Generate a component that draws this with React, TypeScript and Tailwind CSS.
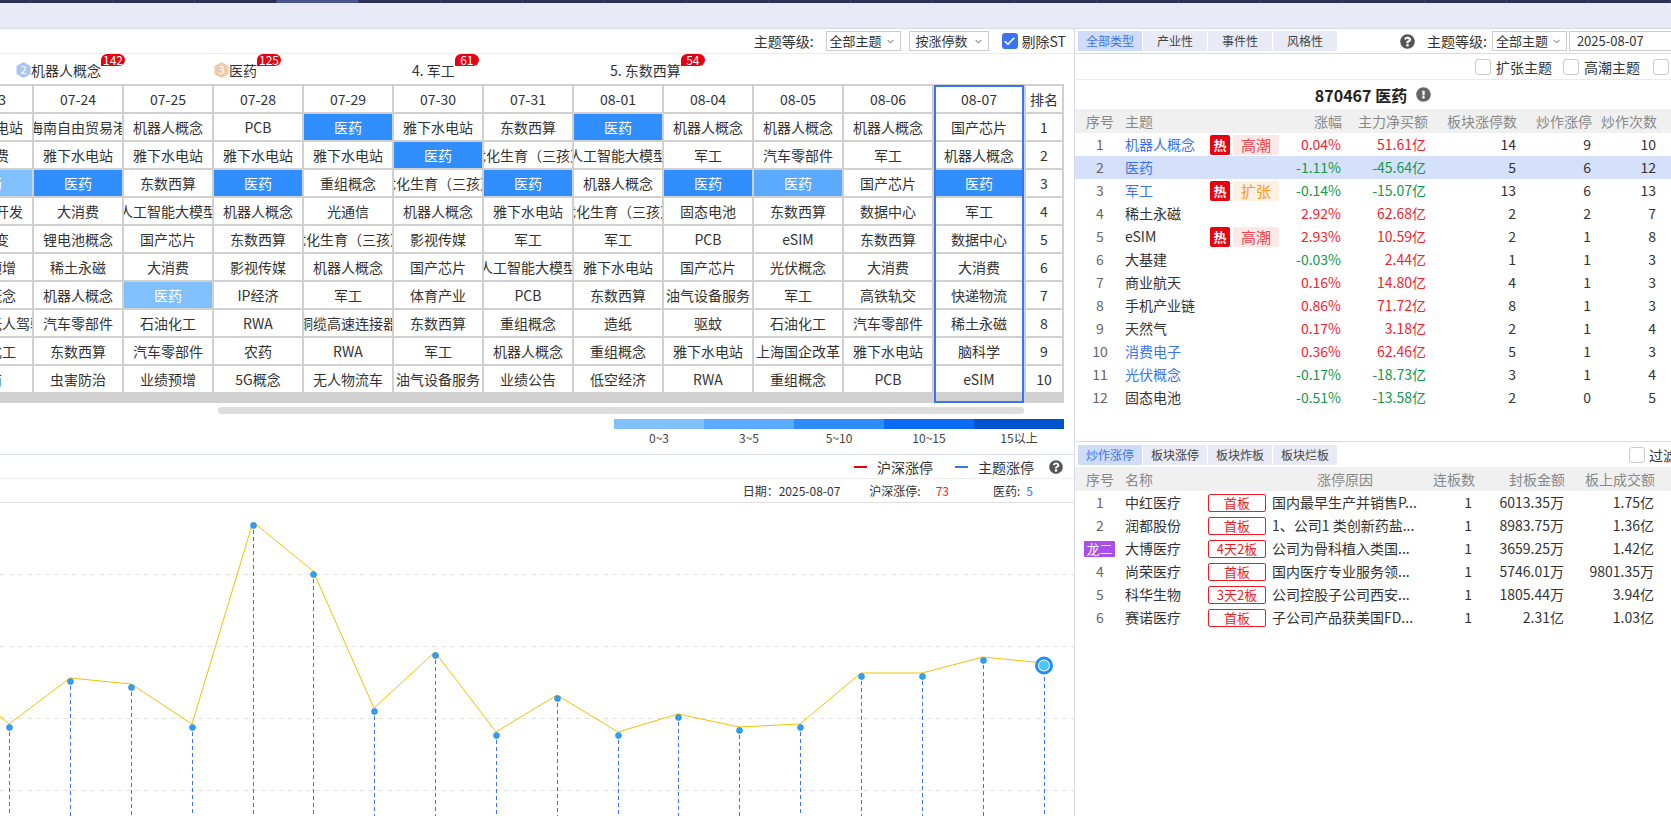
import { Calendar, Check, ChevronDown } from 'lucide-react';
import { FaExclamationCircle, FaQuestionCircle } from 'react-icons/fa';

const dates = ['07-23', '07-24', '07-25', '07-28', '07-29', '07-30', '07-31', '08-01', '08-04', '08-05', '08-06', '08-07'];

const grid = [
  ['雅下水电站', '海南自由贸易港', '机器人概念', 'PCB', '医药', '雅下水电站', '东数西算', '医药', '机器人概念', '机器人概念', '机器人概念', '国产芯片'],
  ['大消费', '雅下水电站', '雅下水电站', '雅下水电站', '雅下水电站', '医药', '优化生育（三孩）', '人工智能大模型', '军工', '汽车零部件', '军工', '机器人概念'],
  ['医药', '医药', '东数西算', '医药', '重组概念', '优化生育（三孩）', '医药', '机器人概念', '医药', '医药', '国产芯片', '医药'],
  ['房地产开发', '大消费', '人工智能大模型', '机器人概念', '光通信', '机器人概念', '雅下水电站', '优化生育（三孩）', '固态电池', '东数西算', '数据中心', '军工'],
  ['核聚变', '锂电池概念', '国产芯片', '东数西算', '优化生育（三孩）', '影视传媒', '军工', '军工', 'PCB', 'eSIM', '东数西算', '数据中心'],
  ['业绩预增', '稀土永磁', '大消费', '影视传媒', '机器人概念', '国产芯片', '人工智能大模型', '雅下水电站', '国产芯片', '光伏概念', '大消费', '大消费'],
  ['重组概念', '机器人概念', '医药', 'IP经济', '军工', '体育产业', 'PCB', '东数西算', '油气设备服务', '军工', '高铁轨交', '快递物流'],
  ['车路协同无人驾驶', '汽车零部件', '石油化工', 'RWA', '铜缆高速连接器', '东数西算', '重组概念', '造纸', '驱蚊', '石油化工', '汽车零部件', '稀土永磁'],
  ['石油化工', '东数西算', '汽车零部件', '农药', 'RWA', '军工', '机器人概念', '重组概念', '雅下水电站', '上海国企改革', '雅下水电站', '脑科学'],
  ['电商', '虫害防治', '业绩预增', '5G概念', '无人物流车', '油气设备服务', '业绩公告', '低空经济', 'RWA', '重组概念', 'PCB', 'eSIM'],
];

// 医药 cells are tinted by that day's limit-up count
const lightCells = ['2-0', '6-2'];
const midCells = ['2-9'];

const cellClass = (row: number, col: number, name: string) => {
  if (name !== '医药') return 'bg-white text-[#333]';
  const key = `${row}-${col}`;
  if (lightCells.includes(key)) return 'bg-[#80c0ff] text-white';
  if (midCells.includes(key)) return 'bg-[#5aaaff] text-white';
  return 'bg-[#318eff] text-white';
};

const themes = [
  { medal: '2', fill: '#a9c7ec', name: '机器人概念', count: 142 },
  { medal: '3', fill: '#efcba8', name: '医药', count: 125 },
  { name: '4. 军工', count: 61 },
  { name: '5. 东数西算', count: 54 },
];

const legend = [
  { label: '0~3', bg: 'bg-[#80c0ff]' },
  { label: '3~5', bg: 'bg-[#5aaaff]' },
  { label: '5~10', bg: 'bg-[#2f8cff]' },
  { label: '10~15', bg: 'bg-[#0a6cf5]' },
  { label: '15以上', bg: 'bg-[#0053d0]' },
];

const points = [
  [9, 727], [70, 681], [131, 687], [192, 727], [253, 525], [313, 574], [374, 711], [435, 655], [496, 735], [557, 698],
  [618, 735], [678, 717], [739, 730], [800, 727], [861, 676], [922, 676], [983, 660],
];
const last = [1044, 665];

const themeRows = [
  { no: 1, name: '机器人概念', link: true, tag: '高潮', pct: '0.04%', net: '51.61亿', a: 14, b: 9, c: 10 },
  { no: 2, name: '医药', link: true, pct: '-1.11%', net: '-45.64亿', a: 5, b: 6, c: 12 },
  { no: 3, name: '军工', link: true, tag: '扩张', pct: '-0.14%', net: '-15.07亿', a: 13, b: 6, c: 13 },
  { no: 4, name: '稀土永磁', pct: '2.92%', net: '62.68亿', a: 2, b: 2, c: 7 },
  { no: 5, name: 'eSIM', tag: '高潮', pct: '2.93%', net: '10.59亿', a: 2, b: 1, c: 8 },
  { no: 6, name: '大基建', pct: '-0.03%', net: '2.44亿', a: 1, b: 1, c: 3 },
  { no: 7, name: '商业航天', pct: '0.16%', net: '14.80亿', a: 4, b: 1, c: 3 },
  { no: 8, name: '手机产业链', pct: '0.86%', net: '71.72亿', a: 8, b: 1, c: 3 },
  { no: 9, name: '天然气', pct: '0.17%', net: '3.18亿', a: 2, b: 1, c: 4 },
  { no: 10, name: '消费电子', link: true, pct: '0.36%', net: '62.46亿', a: 5, b: 1, c: 3 },
  { no: 11, name: '光伏概念', link: true, pct: '-0.17%', net: '-18.73亿', a: 3, b: 1, c: 4 },
  { no: 12, name: '固态电池', pct: '-0.51%', net: '-13.58亿', a: 2, b: 0, c: 5 },
];

const stockRows = [
  { no: '1', name: '中红医疗', board: '首板', reason: '国内最早生产并销售P...', count: 1, seal: '6013.35万', vol: '1.75亿' },
  { no: '2', name: '润都股份', board: '首板', reason: '1、公司1 类创新药盐...', count: 1, seal: '8983.75万', vol: '1.36亿' },
  { no: '龙二', name: '大博医疗', board: '4天2板', reason: '公司为骨科植入类国...', count: 1, seal: '3659.25万', vol: '1.42亿' },
  { no: '4', name: '尚荣医疗', board: '首板', reason: '国内医疗专业服务领...', count: 1, seal: '5746.01万', vol: '9801.35万' },
  { no: '5', name: '科华生物', board: '3天2板', reason: '公司控股子公司西安...', count: 1, seal: '1805.44万', vol: '3.94亿' },
  { no: '6', name: '赛诺医疗', board: '首板', reason: '子公司产品获美国FD...', count: 1, seal: '2.31亿', vol: '1.03亿' },
];

const Medal = ({ label, fill }: { label: string; fill: string }) => (
  <svg width="15" height="16" viewBox="0 0 15 16" className="shrink-0">
    <polygon points="7.5,0 14.5,4 14.5,12 7.5,16 0.5,12 0.5,4" fill={fill} />
    <text x="7.5" y="12" textAnchor="middle" fontSize="11" fill="#fff">
      {label}
    </text>
  </svg>
);

const Select = ({ label, width }: { label: string; width: string }) => (
  <div className={`flex h-[20px] shrink-0 items-center justify-between whitespace-nowrap border border-[#ccc] bg-white pl-[3px] pr-[4px] text-[13px] leading-[18px] text-[#333] ${width}`}>
    <span>{label}</span>
    <ChevronDown size={11} color="#555" className="shrink-0" />
  </div>
);

const EmptyBox = () => <span className="h-[16px] w-[16px] shrink-0 rounded-[3px] border border-[#ccc] bg-white" />;

const Tabs = ({ items }: { items: string[] }) => (
  <div className="flex shrink-0 gap-[1px]">
    {items.map((item, i) => (
      <div
        key={item}
        className={`flex h-[20px] w-[64px] items-center justify-center text-[12px] leading-[20px] ${
          i === 0 ? 'bg-[#cfdcf7] text-[#3b73f0]' : 'bg-[#e8ebf5] text-[#444]'
        }`}
      >
        {item}
      </div>
    ))}
  </div>
);

const ThemeTable = () => (
  <div>
    <div className="grid h-[24px] grid-cols-[50px_85px_75px_57px_86px_89px_75px_65px] items-center bg-[#f0f0f0] text-[14px] leading-[24px] text-[#888]">
      <span className="text-center">序号</span>
      <span>主题</span>
      <span />
      <span className="text-right">涨幅</span>
      <span className="text-right">主力净买额</span>
      <span className="text-right">板块涨停数</span>
      <span className="text-right">炒作涨停</span>
      <span className="text-right">炒作次数</span>
    </div>
    {themeRows.map((row) => {
      const tone = row.pct.startsWith('-') ? 'text-[#12994a]' : 'text-[#f5222d]';
      const netTone = row.net.startsWith('-') ? 'text-[#12994a]' : 'text-[#f5222d]';
      return (
        <div
          key={row.no}
          className={`grid h-[23px] grid-cols-[50px_85px_75px_57px_86px_89px_75px_65px] items-center text-[14px] leading-[23px] text-[#333] ${
            row.no === 2 ? 'bg-[#d5e0fb]' : ''
          }`}
        >
          <span className="text-center text-[#666]">{row.no}</span>
          <span className={row.link ? 'text-[#3b73f0]' : ''}>{row.name}</span>
          <span className="flex items-center gap-[3px]">
            {row.tag && (
              <>
                <span className="flex h-[20px] w-[20px] items-center justify-center rounded-[2px] bg-[#e60012] text-[13px] font-bold text-white">
                  热
                </span>
                <span
                  className={`flex h-[20px] w-[46px] items-center justify-center rounded-[2px] text-[15px] ${
                    row.tag === '高潮' ? 'bg-[#fde8e8] text-[#f5444f]' : 'bg-[#fdf1e4] text-[#ff9a1a]'
                  }`}
                >
                  {row.tag}
                </span>
              </>
            )}
          </span>
          <span className={`pr-[1px] text-right ${tone}`}>{row.pct}</span>
          <span className={`pr-[2px] text-right ${netTone}`}>{row.net}</span>
          <span className="pr-[1px] text-right">{row.a}</span>
          <span className="pr-[1px] text-right">{row.b}</span>
          <span className="pr-[1px] text-right">{row.c}</span>
        </div>
      );
    })}
  </div>
);

const StockTable = () => (
  <div>
    <div className="grid h-[24px] grid-cols-[50px_83px_58px_158px_51px_90px_90px] items-center bg-[#f0f0f0] text-[14px] leading-[24px] text-[#888]">
      <span className="text-center">序号</span>
      <span>名称</span>
      <span />
      <span className="text-center">涨停原因</span>
      <span className="text-right">连板数</span>
      <span className="text-right">封板金额</span>
      <span className="text-right">板上成交额</span>
    </div>
    {stockRows.map((row) => (
      <div
        key={row.name}
        className="grid h-[23px] grid-cols-[50px_83px_58px_158px_51px_90px_90px] items-center text-[14px] leading-[23px] text-[#333]"
      >
        {row.no === '龙二' ? (
          <span className="ml-[9px] flex h-[16px] w-[31px] items-center justify-center rounded-[1px] bg-[#a94dee] text-[13px] text-white">
            {row.no}
          </span>
        ) : (
          <span className="text-center text-[#666]">{row.no}</span>
        )}
        <span>{row.name}</span>
        <span className="flex h-[18px] items-center justify-center rounded-[2px] border border-[#f01c24] text-[13px] text-[#f01c24]">
          {row.board}
        </span>
        <span className="whitespace-nowrap pl-[6px]">{row.reason}</span>
        <span className="pr-[3px] text-right">{row.count}</span>
        <span className="pr-[1px] text-right">{row.seal}</span>
        <span className="pr-[1px] text-right">{row.vol}</span>
      </div>
    ))}
  </div>
);

const Chart = () => {
  const line = points.map(([x, y]) => `${x},${y - 506}`).join(' ');
  return (
    <svg width="1074" height="313" viewBox="0 0 1074 313" className="block">
      {[71.5, 143.5, 215.5, 287.5].map((y) => (
        <line key={y} x1="0" x2="1074" y1={y} y2={y} stroke="#e2e2e2" strokeDasharray="5 4" />
      ))}
      {[...points, last].map(([x, y]) => (
        <line key={x} x1={x + 0.5} x2={x + 0.5} y1={y - 503 + 5} y2="313" stroke="#3b73f0" strokeDasharray="4 3" />
      ))}
      <polyline points={`0,213 ${line} 1044,160`} fill="none" stroke="#f2c200" strokeWidth="1" />
      {points.map(([x, y]) => (
        <circle key={x} cx={x + 0.5} cy={y - 502.5} r="3" fill="#2f9ff2" stroke="#1f83d8" strokeWidth="0.6" />
      ))}
      <circle cx={last[0]} cy={last[1] - 502.5} r="7.5" fill="#fff" stroke="#1f8fff" strokeWidth="3" />
      <circle cx={last[0]} cy={last[1] - 502.5} r="5" fill="#4dc3ff" />
    </svg>
  );
};

const LeftPanel = () => (
  <div className="w-[1075px] shrink-0 overflow-hidden border-r border-[#d5d9ea]">
    <div className="flex h-[25px] items-center justify-end border-b border-[#e8ebf5] pr-[8px] text-[14px] leading-[20px] text-[#333]">
      <span>主题等级:</span>
      <Select label="全部主题" width="w-[75px] ml-[12px]" />
      <Select label="按涨停数" width="w-[80px] ml-[8px] pl-[6px]" />
      <span className="ml-[13px] flex h-[16px] w-[16px] items-center justify-center rounded-[3px] bg-[#3b73f0]">
        <Check size={13} color="#fff" strokeWidth={3} />
      </span>
      <span className="ml-[4px]">剔除ST</span>
    </div>

    <div className="flex h-[30px] pl-[16px] pt-[6px] text-[14px] leading-[20px] text-[#333]">
      {themes.map((theme) => (
        <div key={theme.name} className="w-[198px] shrink-0">
          <span className="relative inline-flex items-center">
            {theme.medal && <Medal label={theme.medal} fill={theme.fill} />}
            {theme.name}
            <span className="absolute left-full top-[-6px] flex h-[12px] w-[24px] items-center justify-center rounded-t-[7px] rounded-br-[7px] bg-[#e60012] text-[12px] leading-[12px] text-white">
              {theme.count}
            </span>
          </span>
        </div>
      ))}
    </div>

    <div className="relative w-[1064px] overflow-hidden bg-[#d0d0d0] pb-[11px] pt-[2px]">
      <div className="ml-[-56px] grid w-[1120px] grid-cols-[repeat(11,88px)_90px_36px] gap-[2px] text-[14px] leading-[26px]">
        {dates.map((date) => (
          <div key={date} className="flex h-[26px] items-center justify-center bg-white text-[#333]">
            {date}
          </div>
        ))}
        <div className="flex h-[26px] items-center justify-center bg-white text-[#333]">排名</div>
        {grid.map((cells, row) => (
          <div key={row} className="contents">
            {cells.map((name, col) => (
              <div
                key={col}
                className={`flex h-[26px] items-center justify-center overflow-hidden whitespace-nowrap ${cellClass(row, col, name)}`}
              >
                {name}
              </div>
            ))}
            <div className="flex h-[26px] items-center justify-center bg-white text-[#333]">{row + 1}</div>
          </div>
        ))}
      </div>
      <div className="absolute bottom-0 left-[934px] top-[1px] w-[90px] border-[2.5px] border-[#3b73f0]" />
    </div>

    <div className="ml-[218px] mt-[4px] h-[7px] w-[806px] rounded-[3px] bg-[#dedede]" />

    <div className="ml-[614px] mt-[5px] flex h-[35px]">
      {legend.map((item) => (
        <div key={item.label} className="w-[90px]">
          <div className={`h-[10px] ${item.bg}`} />
          <div className="h-[18px] text-center text-[12px] leading-[18px] text-[#444]">{item.label}</div>
        </div>
      ))}
    </div>

    <div className="border-t border-[#d5d9ea]">
      <div className="flex h-[24px] items-center justify-end border-b border-[#eeeeee] pr-[11px] text-[14px] leading-[20px] text-[#333]">
        <span className="h-[2px] w-[13px] bg-[#e60012]" />
        <span className="ml-[10px]">沪深涨停</span>
        <span className="ml-[22px] h-[2px] w-[13px] bg-[#3b73f0]" />
        <span className="ml-[10px]">主题涨停</span>
        <FaQuestionCircle size={14} color="#555" className="ml-[15px]" />
      </div>
      <div className="flex h-[24px] items-center justify-end border-b border-[#e0e0e0] pr-[41px] text-[12px] leading-[18px] text-[#333]">
        <span>日期：2025-08-07</span>
        <span className="ml-[29px]">沪深涨停:</span>
        <span className="ml-[15px] text-[#f5222d]">73</span>
        <span className="ml-[44px]">医药:</span>
        <span className="ml-[6px] text-[#3b73f0]">5</span>
      </div>
      <Chart />
    </div>
  </div>
);

const RightPanel = () => (
  <div className="min-w-0 flex-1 overflow-hidden">
    <div className="h-[413px] border-b border-[#d5d9ea]">
      <div className="flex h-[25px] items-center border-b border-[#d5d9ea] pl-[3px] text-[14px] leading-[20px] text-[#333]">
        <Tabs items={['全部类型', '产业性', '事件性', '风格性']} />
        <FaQuestionCircle size={15} color="#555" className="ml-[63px] shrink-0" />
        <span className="ml-[12px] shrink-0">主题等级:</span>
        <Select label="全部主题" width="w-[75px] ml-[5px]" />
        <div className="ml-[2px] flex h-[20px] w-[140px] shrink-0 items-center border border-[#ccc] pl-[7px] text-[13px]">
          2025-08-07
          <Calendar size={14} color="#555" className="ml-[26px] shrink-0" />
        </div>
      </div>
      <div className="flex h-[26px] items-center gap-[5px] border-b border-[#e8ebf5] pl-[400px] text-[14px] leading-[20px] text-[#333]">
        <EmptyBox />
        <span className="shrink-0">扩张主题</span>
        <span className="w-[1px] shrink-0" />
        <EmptyBox />
        <span className="shrink-0">高潮主题</span>
        <span className="w-[3px] shrink-0" />
        <EmptyBox />
        <span className="shrink-0">主题</span>
      </div>
      <div className="flex h-[29px] items-center justify-center gap-[9px] text-[16px] font-bold leading-[24px] text-[#222]">
        <span>870467 医药</span>
        <FaExclamationCircle size={15} color="#666" />
      </div>
      <ThemeTable />
    </div>
    <div className="flex h-[25px] items-center pl-[3px] text-[14px] leading-[20px] text-[#333]">
      <Tabs items={['炒作涨停', '板块涨停', '板块炸板', '板块烂板']} />
      <span className="ml-[292px] flex shrink-0 items-center gap-[4px]">
        <EmptyBox />
        过滤ST
      </span>
    </div>
    <StockTable />
  </div>
);

const App = () => (
  <div className="flex h-[816px] w-[1671px] flex-col overflow-hidden bg-white font-['Noto_Sans_CJK_SC','Noto_Sans',sans-serif]">
    <div className="flex h-[3px] shrink-0 bg-[#2b3054]">
      <div className="w-[52px] border-r border-[#3f4568]" />
      {Array.from({ length: 20 }, (_, i) => (
        <div key={i} className={`w-[82px] shrink-0 border-r border-[#3f4568] ${i === 3 ? 'bg-[#4a5590]' : ''}`} />
      ))}
    </div>
    <div className="h-[26px] shrink-0 border-b border-[#d5d9ea] bg-[#e8ebf5]" />
    <div className="flex min-h-0 flex-1">
      <LeftPanel />
      <RightPanel />
    </div>
  </div>
);

export default App;
